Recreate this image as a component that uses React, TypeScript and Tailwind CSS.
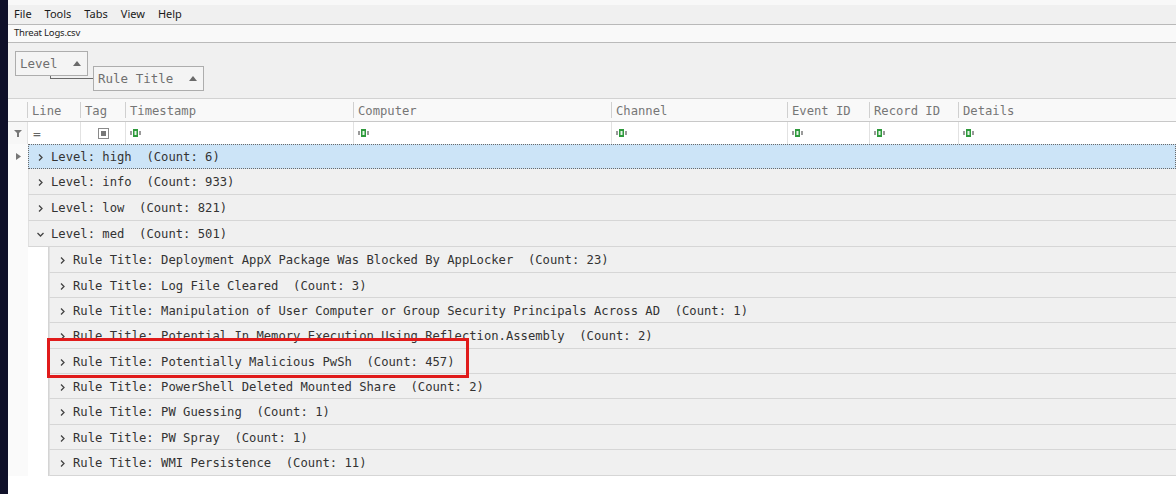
import React from "react";

const MONO = "font-['DejaVu_Sans_Mono','Liberation_Mono',monospace]";
const UI = "font-['Noto_Sans','Open_Sans',sans-serif]";

const COLS = [
  { key: "ind", label: "", w: "w-[19px]" },
  { key: "line", label: "Line", w: "w-[53px]" },
  { key: "tag", label: "Tag", w: "w-[45px]" },
  { key: "ts", label: "Timestamp", w: "w-[228px]" },
  { key: "comp", label: "Computer", w: "w-[258px]" },
  { key: "chan", label: "Channel", w: "w-[176px]" },
  { key: "evt", label: "Event ID", w: "w-[82px]" },
  { key: "rec", label: "Record ID", w: "w-[89px]" },
  { key: "det", label: "Details", w: "flex-1" },
];

type Row = { level: 0 | 1; text: string; open?: boolean; selected?: boolean; h: string };

const ROWS: Row[] = [
  { level: 0, text: "Level: high  (Count: 6)", selected: true, h: "h-[25px]" },
  { level: 0, text: "Level: info  (Count: 933)", h: "h-[26px]" },
  { level: 0, text: "Level: low  (Count: 821)", h: "h-[26px]" },
  { level: 0, text: "Level: med  (Count: 501)", open: true, h: "h-[26px]" },
  { level: 1, text: "Rule Title: Deployment AppX Package Was Blocked By AppLocker  (Count: 23)", h: "h-[26px]" },
  { level: 1, text: "Rule Title: Log File Cleared  (Count: 3)", h: "h-[25px]" },
  { level: 1, text: "Rule Title: Manipulation of User Computer or Group Security Principals Across AD  (Count: 1)", h: "h-[25px]" },
  { level: 1, text: "Rule Title: Potential In Memory Execution Using Reflection.Assembly  (Count: 2)", h: "h-[26px]" },
  { level: 1, text: "Rule Title: Potentially Malicious PwSh  (Count: 457)", h: "h-[25px]" },
  { level: 1, text: "Rule Title: PowerShell Deleted Mounted Share  (Count: 2)", h: "h-[25px]" },
  { level: 1, text: "Rule Title: PW Guessing  (Count: 1)", h: "h-[26px]" },
  { level: 1, text: "Rule Title: PW Spray  (Count: 1)", h: "h-[25px]" },
  { level: 1, text: "Rule Title: WMI Persistence  (Count: 11)", h: "h-[26px]" },
];

function Chevron({ open }: { open?: boolean }) {
  return (
    <svg width="9" height="9" viewBox="0 0 9 9" className="shrink-0">
      {open ? (
        <path d="M1.5 3 L4.5 6 L7.5 3" fill="none" stroke="#444" strokeWidth="1.3" />
      ) : (
        <path d="M3 1.5 L6 4.5 L3 7.5" fill="none" stroke="#444" strokeWidth="1.3" />
      )}
    </svg>
  );
}

function AbcIcon() {
  return (
    <svg width="12" height="8" viewBox="0 0 12 8">
      <rect x="0" y="2" width="2" height="4" fill="#9a9a9a" />
      <rect x="3" y="0" width="5" height="8" fill="#2f9a3c" />
      <rect x="4.5" y="2" width="2" height="4" fill="#e8f5e9" />
      <rect x="9" y="2" width="2" height="4" fill="#9a9a9a" />
    </svg>
  );
}

function Chip({ label, w }: { label: string; w: string }) {
  return (
    <div className={`relative z-10 flex items-center justify-between ${w} h-[25px] border border-[#adadad] bg-[#f4f4f4] pl-[4px] pr-[6px] ${MONO} text-[12.5px] text-[#6f6f6f]`}>
      <span className="pt-[1px]">{label}</span>
      <svg width="8" height="5" viewBox="0 0 8 5">
        <path d="M0 5 L4 0 L8 5 Z" fill="#6a6a6a" />
      </svg>
    </div>
  );
}

export default function App() {
  return (
    <div className="w-[1176px] h-[494px] bg-white flex overflow-hidden relative">
      <div className="w-[8px] bg-[#0f1029] shrink-0" />
      <div className="flex-1 flex flex-col">
        <div className="h-[5px] bg-[#f8f8f8]" />
        <div className={`h-[20px] bg-[#f0f0f0] border-b border-[#b9b9b9] flex items-center gap-[13px] pl-[6px] ${UI} text-[11px] text-[#1a1a1a]`}>
          <span>File</span>
          <span>Tools</span>
          <span>Tabs</span>
          <span>View</span>
          <span>Help</span>
        </div>
        <div className={`h-[18px] bg-[#f9f9f9] border-b border-[#bababa] flex items-center pl-[6px] ${UI} text-[9.5px] text-[#222] tracking-[-0.2px]`}>
          Threat Logs.csv
        </div>
        <div className="h-[56px] bg-[#f0f0f0] border-b border-[#d2d2d2] flex items-start pt-[8px] pl-[7px]">
          <div className="relative">
            <Chip label="Level" w="w-[73px]" />
            <div className="absolute left-[35px] top-[24px] w-[44px] h-[4px] border-l border-b border-[#6a6a6a]" />
          </div>
          <div className="ml-[5px] mt-[15px]">
            <Chip label="Rule Title" w="w-[111px]" />
          </div>
        </div>
        <div className={`h-[23px] bg-[#f9f9f9] border-b border-[#c8c8c8] flex ${MONO} text-[12.2px] text-[#767676]`}>
          {COLS.map((c, i) => (
            <div key={c.key} className={`${c.w} shrink-0 flex items-center pl-[4px] pt-[2px] ${i > 0 ? "border-l border-[#d0d0d0] my-[3px]" : ""}`}>
              {c.label}
            </div>
          ))}
        </div>
        <div className={`h-[22px] bg-white flex ${MONO} text-[13px] text-[#555]`}>
          {COLS.map((c, i) => (
            <div key={c.key} className={`${c.w} shrink-0 flex items-center ${i > 0 ? "border-l border-[#e2e2e2]" : ""} ${i === 0 ? "justify-center bg-[#f7f7f7]" : "pl-[4px]"}`}>
              {c.key === "ind" && (
                <svg width="8" height="7" viewBox="0 0 8 7">
                  <path d="M0 0 H8 L5 3 V7 H3 V3 Z" fill="#777" />
                </svg>
              )}
              {c.key === "line" && <span className="pl-[1px] pt-[2px] text-[#666]">=</span>}
              {c.key === "tag" && (
                <div className="ml-[13px] w-[11px] h-[11px] border border-[#8a8a8a] bg-white flex items-center justify-center">
                  <div className="w-[5px] h-[5px] bg-[#777]" />
                </div>
              )}
              {i > 2 && <AbcIcon />}
            </div>
          ))}
        </div>
        <div className={`flex flex-col ${MONO} text-[12.2px] text-[#333]`}>
          {ROWS.map((r, i) => (
            <div key={i} className={`flex ${r.h}`}>
              <div className="w-[20px] shrink-0 bg-[#fafafa] flex items-center justify-center">
                {r.selected && (
                  <svg width="5" height="7" viewBox="0 0 5 7">
                    <path d="M0 0 L5 3.5 L0 7 Z" fill="#777" />
                  </svg>
                )}
              </div>
              {r.level === 1 && <div className="w-[21px] shrink-0 bg-white border-r border-[#d4d4d4]" />}
              <div
                className={`flex-1 flex items-center gap-[6px] pt-[2px] ${r.level === 1 ? "pl-[8px]" : "pl-[7px]"} ${
                  r.selected
                    ? "bg-[#cce4f7] border border-dotted border-[#6a6a6a]"
                    : "bg-[#f0f0f0] border-b border-[#d6d6d6] border-l border-l-[#e0e0e0]"
                }`}
              >
                <Chevron open={r.open} />
                <span className="whitespace-pre">{r.text}</span>
              </div>
            </div>
          ))}
        </div>
      </div>
      <div className="absolute left-[47px] top-[338px] w-[422px] h-[40px] border-[3px] border-[#e01b1b] pointer-events-none" />
    </div>
  );
}
